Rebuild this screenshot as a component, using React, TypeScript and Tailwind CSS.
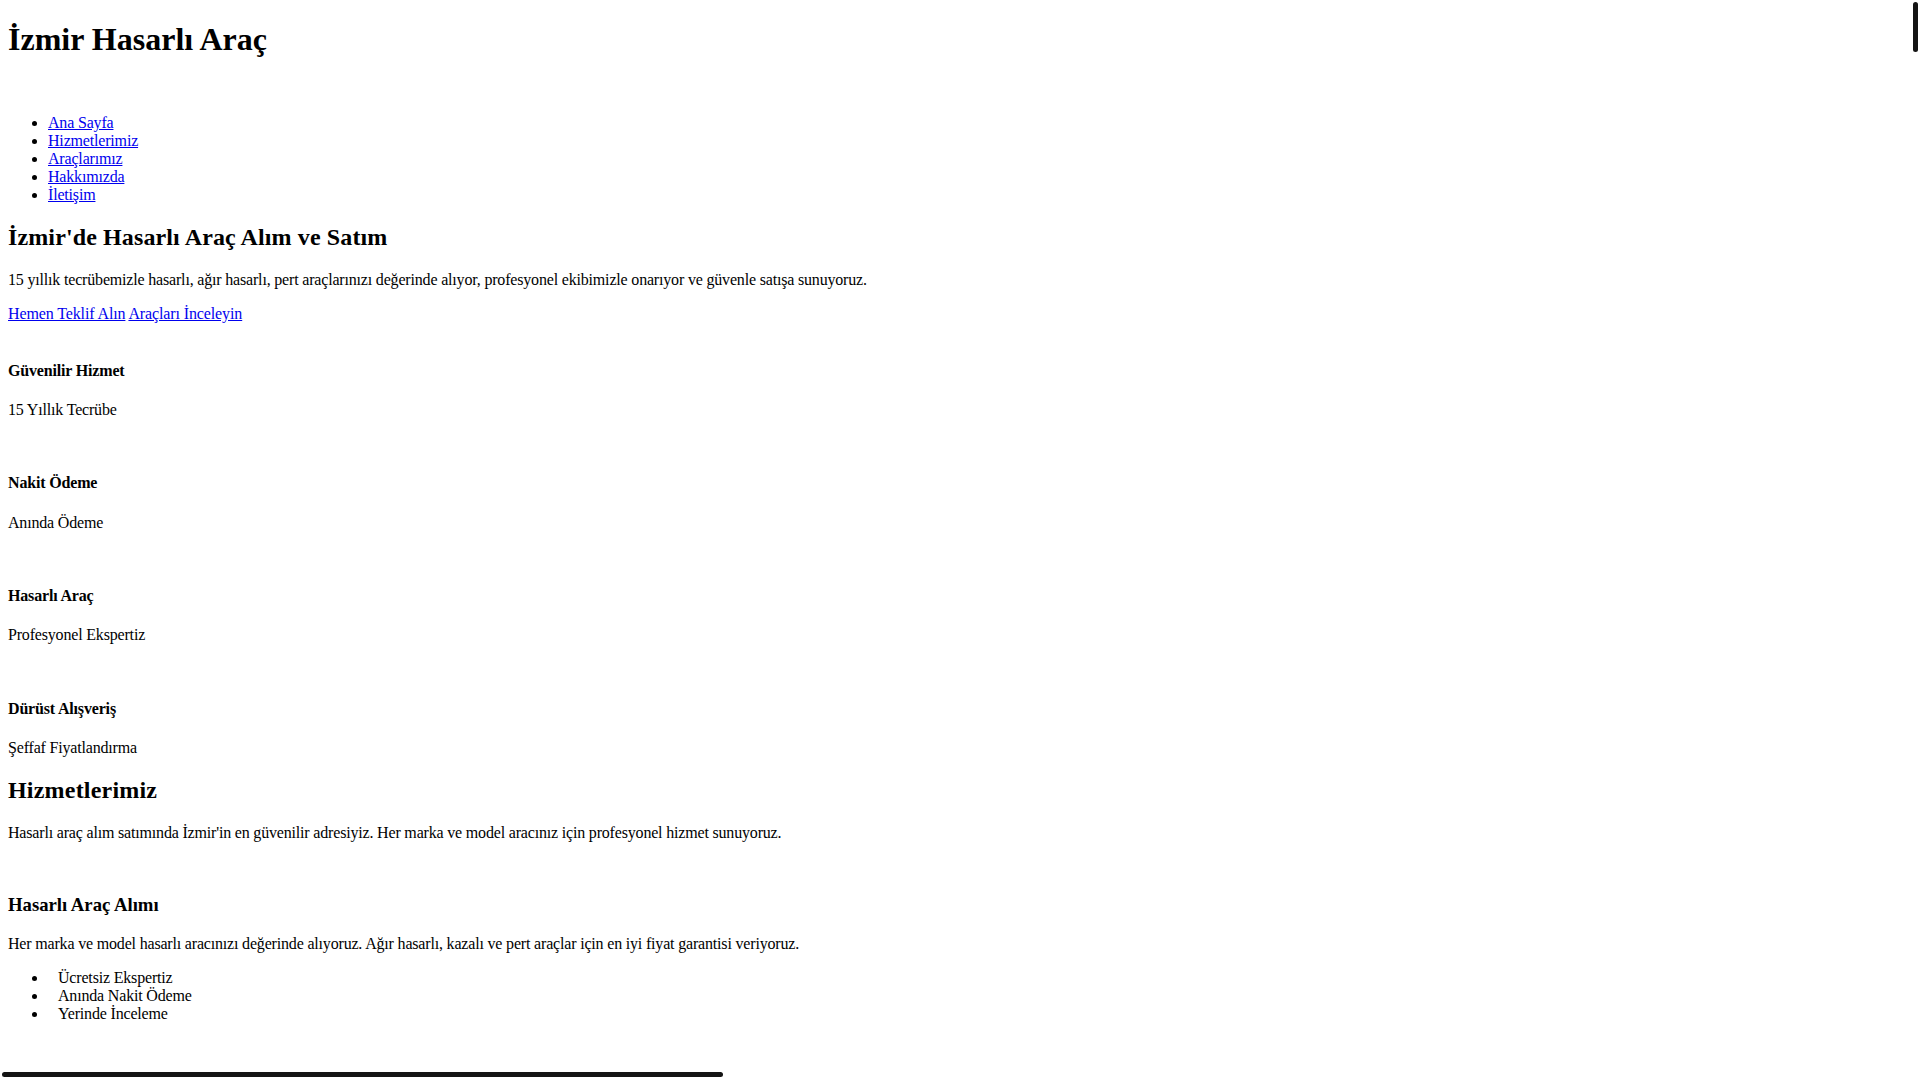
import React from "react";

// Plain, unstyled-looking landing page: browser-default typography rebuilt with Tailwind.
// The empty 18px slots stand where the page's (unloaded) icons would sit.

const nav = ["Ana Sayfa", "Hizmetlerimiz", "Araçlarımız", "Hakkımızda", "İletişim"];

const features = [
  { title: "Güvenilir Hizmet", text: "15 Yıllık Tecrübe" },
  { title: "Nakit Ödeme", text: "Anında Ödeme" },
  { title: "Hasarlı Araç", text: "Profesyonel Ekspertiz" },
  { title: "Dürüst Alışveriş", text: "Şeffaf Fiyatlandırma" },
];

const perks = ["Ücretsiz Ekspertiz", "Anında Nakit Ödeme", "Yerinde İnceleme"];

function IconSlot() {
  return <span aria-hidden className="block h-[18px]" />;
}

function Link({ children }: { children: React.ReactNode }) {
  return (
    <a href="#" className="text-[#0000ee] underline">
      {children}
    </a>
  );
}

// overlay scrollbar thumbs, as the browser draws them over a long, wide page
function Scrollbars() {
  return (
    <>
      <div className="pointer-events-none fixed right-[2px] top-[2px] h-[50px] w-[5px] rounded-full bg-[#141414]" />
      <div className="pointer-events-none fixed bottom-[3px] left-[2px] h-[5px] w-[721px] rounded-full bg-[#141414]" />
    </>
  );
}

export default function App() {
  return (
    <div className="m-2 bg-white font-['Liberation_Serif','Times_New_Roman',serif] text-base leading-[normal] tracking-[-0.18px] text-black">
      <header>
        <h1 className="my-[21.44px] text-[32px] font-bold leading-[normal] tracking-normal">İzmir Hasarlı Araç</h1>
        <nav>
          <IconSlot />
          <ul className="my-4 list-disc pl-10">
            {nav.map((n) => (
              <li key={n}>
                <Link>{n}</Link>
              </li>
            ))}
          </ul>
        </nav>
      </header>

      <section>
        <h2 className="my-[19.92px] text-2xl font-bold leading-[normal] tracking-[0.12px]">
          İzmir'de Hasarlı Araç Alım ve Satım
        </h2>
        <p className="my-4">
          15 yıllık tecrübemizle hasarlı, ağır hasarlı, pert araçlarınızı değerinde alıyor, profesyonel ekibimizle onarıyor
          ve güvenle satışa sunuyoruz.
        </p>
        <div className="tracking-[-0.12px]">
          <Link>Hemen Teklif Alın</Link> <Link>Araçları İnceleyin</Link>
        </div>

        <div>
          {features.map((f) => (
            <div key={f.title}>
              <IconSlot />
              <h4 className="my-[21.28px] font-bold tracking-[-0.17px]">{f.title}</h4>
              <p className="my-4">{f.text}</p>
            </div>
          ))}
        </div>
      </section>

      <section>
        <h2 className="my-[19.92px] text-2xl font-bold leading-[normal] tracking-[0.2px]">Hizmetlerimiz</h2>
        <p className="my-4">
          Hasarlı araç alım satımında İzmir'in en güvenilir adresiyiz. Her marka ve model aracınız için profesyonel hizmet
          sunuyoruz.
        </p>
        <div>
          <IconSlot />
          <h3 className="my-[18.72px] text-[18.72px] font-bold leading-[normal] tracking-normal">Hasarlı Araç Alımı</h3>
          <p className="my-4">
            Her marka ve model hasarlı aracınızı değerinde alıyoruz. Ağır hasarlı, kazalı ve pert araçlar için en iyi fiyat
            garantisi veriyoruz.
          </p>
          <ul className="my-4 list-disc pl-10">
            {perks.map((p) => (
              <li key={p}>
                <span className="ml-[10px]">{p}</span>
              </li>
            ))}
          </ul>
        </div>
      </section>

      <Scrollbars />
    </div>
  );
}
